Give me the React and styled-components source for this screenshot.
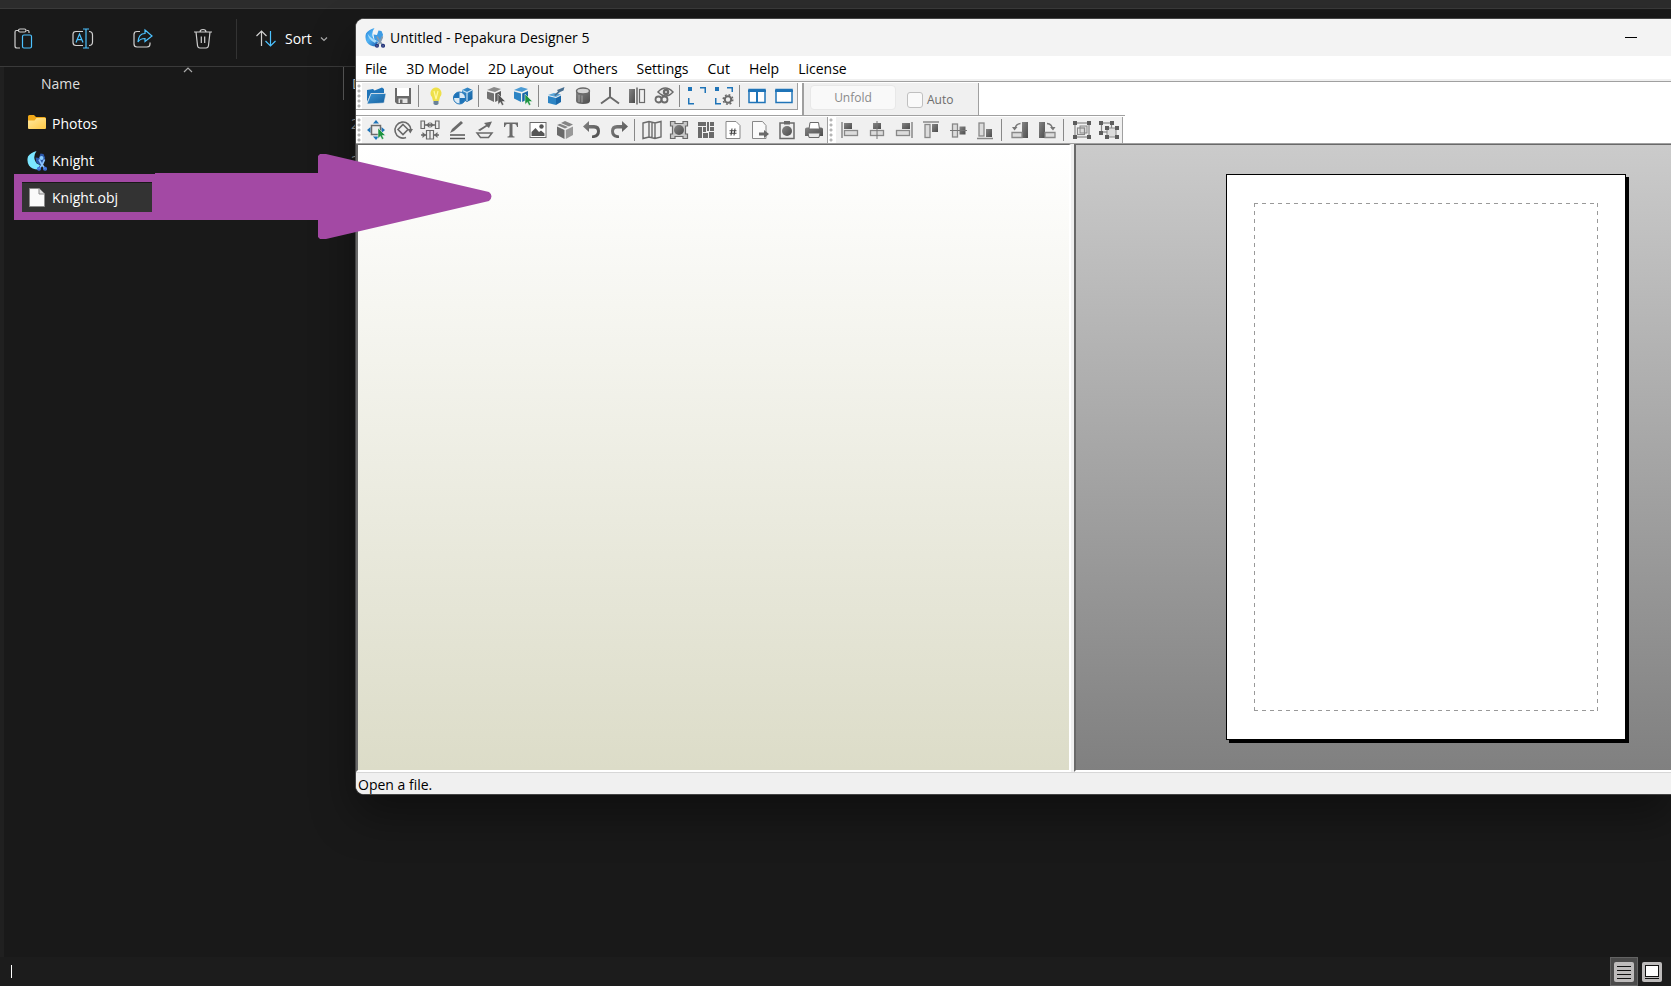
import styled, { createGlobalStyle } from "styled-components";

const GRAY = "#6a6a6a";
const LIGHT = "#dcdcdc";
const BLUE = "#1f74b8";
const SKY = "#4cc2ff";
const PALE = "#d0d0d0";

const App = () => {
  return (
    <Desktop>
      <GlobalStyle />
      <Defs />
      <Explorer />
      <Designer />
      <DragArrow viewBox="0 0 478 86" aria-hidden="true">
        <path
          fillRule="evenodd"
          d="M0 20H141V19H304V2L306 0H312L475 38Q480 42 475 47L312 85H306L304 83V66H0ZM8 28V58H138V28Z"
        />
      </DragArrow>
    </Desktop>
  );
};

const Defs = () => (
  <Hidden aria-hidden="true">
    <linearGradient id="steel" x1="0" y1="0" x2="1" y2="1">
      <stop offset="0" stopColor="#858585" />
      <stop offset="1" stopColor="#4c4c4c" />
    </linearGradient>
    <linearGradient id="azure" x1="0" y1="0" x2="1" y2="1">
      <stop offset="0" stopColor="#3f96d3" />
      <stop offset="1" stopColor="#135f9f" />
    </linearGradient>
    <linearGradient id="moon" x1="0" y1="0" x2="1" y2="1">
      <stop offset="0" stopColor="#1f7fd8" />
      <stop offset="0.45" stopColor="#52b4f4" />
      <stop offset="1" stopColor="#1c5fae" />
    </linearGradient>
    <linearGradient id="folder" x1="0" y1="0" x2="1" y2="1">
      <stop offset="0" stopColor="#ffe9a0" />
      <stop offset="1" stopColor="#ffc843" />
    </linearGradient>
  </Hidden>
);

/* ---------- file explorer ---------- */

const Explorer = () => (
  <Files>
    <TabStrip />
    <Commands>
      <Command aria-label="Paste">
        <Svg $size={22} viewBox="0 0 22 22">
          <path d="M6 2.500H4.500Q3 2.500 3 4V18Q3 20 5 20H8M14.500 2.500H16Q17 2.500 17 4V5" {...line(PALE)} />
          <rect x="6.500" y="1" width="7.500" height="3" rx="1.500" {...line(PALE)} />
          <rect x="10.500" y="7" width="9" height="13" rx="1.500" {...line(SKY)} />
        </Svg>
      </Command>
      <Command aria-label="Rename">
        <Svg $size={22} viewBox="0 0 22 22">
          <path d="M11 3.500H4Q1 3.500 1 6.500V14.500Q1 17.500 4 17.500H11M17 3.500Q20.500 3.500 20.500 7V14Q20.500 17.500 17 17.500" {...line(PALE)} />
          <path d="M4 14.500L7.500 6L11 14.500M5.300 11.700H9.800M14 1V20M11 1H17M11 20H17" {...line(SKY)} />
        </Svg>
      </Command>
      <Command aria-label="Share">
        <Svg $size={22} viewBox="0 0 22 22">
          <path d="M8 3.500H5Q2 3.500 2 6.500V16Q2 19 5 19H15Q18 19 18 16V14.500" {...line(PALE)} />
          <path d="M13 2L20 8L13 13.500V10.500Q8 10.500 6 14Q6.500 5.500 13 5.500Z" {...line(SKY)} />
        </Svg>
      </Command>
      <Command aria-label="Delete">
        <Svg $size={22} viewBox="0 0 22 22">
          <path d="M2 4H20M8 4Q8 1.500 11 1.500T14 4M4 4L5.500 17.500Q5.800 20 8 20H14Q16.200 20 16.500 17.500L18 4M9.300 8.500V15M12.700 8.500V15" {...line(PALE)} />
        </Svg>
      </Command>
      <CommandRule />
      <SortButton>
        <Svg $size={22} viewBox="0 0 22 22">
          <path d="M6.500 18V3M1.500 8L6.500 3L11.500 8" {...line(PALE)} />
          <path d="M15.500 3V18M10.500 13L15.500 18L20.500 13" {...line(SKY)} />
        </Svg>
        <span>Sort</span>
        <Svg $size={8} viewBox="0 0 8 8">
          <path d="M1 2.500L4 5.500L7 2.500" {...line("#aaa")} />
        </Svg>
      </SortButton>
    </Commands>
    <Listing>
      <FileTable>
        <thead>
          <tr>
            <NameHead>
              <HeadLabel>
                Name
                <SortMark viewBox="0 0 10 6">
                  <path d="M1 5L5 1L9 5" {...line("#aaa")} />
                </SortMark>
              </HeadLabel>
            </NameHead>
            <DateHead>
              <DateLabel>D</DateLabel>
            </DateHead>
          </tr>
        </thead>
        <tbody>
          <FileRow name="Photos" date="2" icon={<FolderIcon />} />
          <FileRow name="Knight" date="2" icon={<AppIcon bright />} />
          <FileRow name="Knight.obj" icon={<PageIcon />} selected />
        </tbody>
      </FileTable>
    </Listing>
    <Footer>
      <Caret />
      <Views>
        <ViewButton aria-label="Details" $active>
          <Svg $size={20} viewBox="0 0 20 20">
            <rect width="20" height="20" rx="2" fill="#bdbbbb" />
            <path d="M3 4.500H17M3 8.500H17M3 12.500H17M3 16.500H17" stroke="#111" />
          </Svg>
        </ViewButton>
        <ViewButton aria-label="Large icons">
          <Svg $size={20} viewBox="0 0 20 20">
            <rect width="20" height="20" rx="2" fill="#bdbbbb" />
            <rect x="3.500" y="3.500" width="13" height="11" fill="#fff" stroke="#111" />
            <path d="M3 16.500H17" stroke="#111" />
          </Svg>
        </ViewButton>
      </Views>
    </Footer>
  </Files>
);

const FileRow = ({ name, date, icon, selected }) => (
  <tr>
    <NameCell>
      <FileName $selected={selected}>
        {icon}
        {name}
      </FileName>
    </NameCell>
    <DateCell>{date}</DateCell>
  </tr>
);

const line = (color, width = 1.2) => ({
  fill: "none",
  stroke: color,
  strokeWidth: width,
});

const FolderIcon = () => (
  <Svg $size={20} viewBox="0 0 20 20">
    <path d="M1 2.500Q1 1 2.500 1H7L9 3H17.500Q19 3 19 4.500V7H1Z" fill="#f0a818" />
    <path d="M1 6.500H7.500L9.500 4H18Q19 4 19 5V14Q19 15 18 15H2Q1 15 1 14Z" fill="url(#folder)" />
  </Svg>
);

const PageIcon = () => (
  <Svg $size={20} viewBox="0 0 20 20">
    <path d="M2.500 .5H12L17.500 6V18.500H2.500Z" fill="#fafafa" stroke="#8a8a8a" />
    <path d="M12 .5V6H17.500" fill="#e2e2e2" stroke="#8a8a8a" />
  </Svg>
);

const AppIcon = ({ bright }) => (
  <Svg $size={20} viewBox="0 0 20 20">
    <path
      d="M9.500 0Q3.500 1.500 1 5.500Q-.5 10 2 14.500Q5 18.500 11 18.500L13 14Q9 13 8 9.500Q6 5 9.500 0Z"
      fill={bright ? "#7be6ff" : "url(#moon)"}
    />
    <path
      d="M8.500 6.500L12 7L13.500 2.500L16.500 3L18 6.500L17 12L13.500 14L9.500 12Z"
      fill={bright ? "#2a56a8" : "#3c9be4"}
    />
    {!bright && <path d="M2.500 5.500Q5 10 11.500 12.500L10 15Q4 12.500 2.500 5.500Z" fill="#a8dcfa" />}
    <path
      d="M12 8.500L14.500 13L18.300 18M17.500 8.500L15.500 13L12 18"
      stroke={bright ? "#8cc4ff" : "#8598ac"}
      strokeWidth="1.700"
      fill="none"
    />
    {bright && <circle cx="14.500" cy="7" r="2" fill="#8ccfff" />}
    <circle cx="12" cy="17.800" r="1.300" {...line(bright ? "#3f73e0" : "#25357c", 1.500)} />
    <circle cx="18" cy="17.800" r="1.300" {...line(bright ? "#3f73e0" : "#25357c", 1.500)} />
  </Svg>
);

/* ---------- designer window ---------- */

const menus = ["File", "3D Model", "2D Layout", "Others", "Settings", "Cut", "Help", "License"];

const Designer = () => (
  <Window>
    <TitleBar>
      <AppIcon />
      <Title>Untitled - Pepakura Designer 5</Title>
      <Minimize aria-label="Minimize">
        <MinimizeMark />
      </Minimize>
    </TitleBar>
    <MenuBar>
      {menus.map((menu) => (
        <MenuItem key={menu}>{menu}</MenuItem>
      ))}
    </MenuBar>
    <ToolRow>
      <Toolbar $short>
        <Grip />
        <Tools names={mainTools} />
      </Toolbar>
      <UnfoldBar>
        <UnfoldButton disabled>Unfold</UnfoldButton>
        <AutoLabel>
          <AutoBox type="checkbox" disabled />
          Auto
        </AutoLabel>
      </UnfoldBar>
    </ToolRow>
    <ToolRow $last>
      <ToolStrip>
        <Toolbar>
          <Grip />
          <Tools names={layoutTools} />
        </Toolbar>
        <Toolbar>
          <Grip $wide />
          <Tools names={alignTools} spaced />
        </Toolbar>
      </ToolStrip>
    </ToolRow>
    <Panes>
      <ModelPane />
      <LayoutPane>
        <Paper>
          <PrintMargin />
        </Paper>
      </LayoutPane>
    </Panes>
    <StatusBar>Open a file.</StatusBar>
  </Window>
);

const Tools = ({ names, spaced }) => (
  <ToolGroup>
    {names.map((name, i) =>
      name === "|" ? (
        <ToolRule key={i} $spaced={spaced} />
      ) : (
        <ToolButton key={i} aria-label={name}>
          <Svg $size={20} viewBox="0 0 20 20">
            {icons[name]}
          </Svg>
        </ToolButton>
      )
    )}
  </ToolGroup>
);

const mainTools = [
  "Open", "Save", "|", "Light", "Textures", "|", "Select part", "Select face", "|",
  "Export", "Cylinder", "Axes", "Mirror", "Inspect", "|", "Fit", "Fit settings", "|",
  "Two panes", "One pane",
];

const layoutTools = [
  "Move", "Rotate", "Join", "Edit line", "Edit flaps", "Text", "Image", "Box", "Undo", "Redo", "|",
  "Pages", "Scale", "Arrange", "Numbering", "Export page", "Copy", "Print",
];

const alignTools = [
  "Align left", "Align center", "Align right", "Align top", "Align middle", "Align bottom", "|",
  "Rotate left", "Rotate right", "|", "Group", "Ungroup",
];

const cube = (top, left, right) => (
  <>
    <path d="M1 4L8 1L15 3L9 6Z" fill={top} />
    <path d="M1 5.500L8 7.500V16L1 12.500Z" fill={left} />
    <path d="M9.200 7.500L15 5V13L9.200 16Z" fill={right} />
  </>
);

const cursor = (color) => (
  <path d="M12 8V18.500L14.400 16.200L16 19.500L17.800 18.500L16.200 15.500H19.500Z" fill={color} stroke="#f0f0f0" strokeWidth=".5" />
);

const corner = (x, y) => <rect key={`${x}-${y}`} x={x} y={y} width="4" height="4" fill="#5c5c5c" />;

const icons = {
  Open: (
    <>
      <path d="M1 16V4L7 3L8.500 4.500L16 1.500L18 3V7H5Z" fill={BLUE} />
      <path d="M1 18L5 7.500H20L18 17Z" fill="url(#azure)" stroke="#f0f0f0" strokeWidth=".6" />
    </>
  ),
  Save: (
    <>
      <path d="M2 2H18V18H4L2 16Z" fill={GRAY} />
      <path d="M4 2H16V10H4Z" fill="#fff" />
      <path d="M5.500 12.500H14.500V17H5.500Z" fill="#e4e4e4" />
      <path d="M7 13.500H9.500V17H7Z" fill={GRAY} />
    </>
  ),
  Light: (
    <>
      <path d="M10 1.500A5.700 5.700 0 0 1 14 11L13 15H7L6 11A5.700 5.700 0 0 1 10 1.500Z" fill="#eee04a" />
      <path d="M8 5L10 13L12 5" {...line("#fff8a0")} />
      <path d="M7.500 15H12.500V18L11 19H9L7.500 18Z" fill="#6a8298" />
    </>
  ),
  Textures: (
    <>
      <path d="M9 4L14.500 1.500L19.500 4V13L14 16L9 13Z" fill="url(#azure)" />
      <path d="M9.500 4.500L14 6.500L19 4M14 6.500V15" {...line("#c6e0f2")} />
      <circle cx="6.500" cy="12" r="6" fill="#dbeaf5" stroke={BLUE} />
      <path d="M6.500 12V6A6 6 0 0 0 .5 12ZM6.500 12V18A6 6 0 0 0 12.500 12Z" fill={BLUE} />
    </>
  ),
  "Select part": (
    <>
      {cube("#8a8a8a", "#707070", "#5c5c5c")}
      {cursor("#555")}
    </>
  ),
  "Select face": (
    <>
      {cube("#4b9bd4", "#2c84c4", "#1967a8")}
      {cursor("#1d9440")}
    </>
  ),
  Export: (
    <>
      <path d="M2 9L8 7L15 8.500L10 11Z" fill="#5aa5d8" />
      <path d="M2 10L10 12V19L2 17Z" fill="#2c84c4" />
      <path d="M10 12L15 9.500V16L10 19Z" fill="#1967a8" />
      <path d="M8 9L12 5.500L11 4L18.500 1L17.500 4.500L14 6L9.500 10Z" fill="#486f90" />
    </>
  ),
  Cylinder: (
    <>
      <path d="M3 5V15Q3 18 10 18T17 15V5Z" fill="url(#steel)" />
      <ellipse cx="10" cy="5" rx="6.500" ry="3" fill="#d6d6d6" stroke={GRAY} strokeWidth="1.500" />
      <path d="M6 9V16M9 9.500V16.500" stroke="#a5a5a5" />
    </>
  ),
  Axes: <path d="M10 1V11L1 17.500M10 11L19 17.500" {...line(GRAY, 2)} />,
  Mirror: (
    <>
      <rect x="2" y="3" width="6" height="14" fill="url(#steel)" />
      <path d="M10 1.500V18.500" stroke="#444" strokeWidth="1.200" />
      <rect x="12.500" y="3.500" width="5" height="13" {...line(GRAY)} />
    </>
  ),
  Inspect: (
    <>
      <path d="M4 6Q11-2 19 6Q12 14 4 6Z" fill="#e8e8e8" stroke={GRAY} strokeWidth="1.500" />
      <circle cx="12" cy="6" r="3.200" fill={GRAY} />
      <circle cx="12" cy="6" r="1" fill="#ddd" />
      <circle cx="4.500" cy="13.500" r="3" {...line(GRAY, 1.800)} />
      <circle cx="10.500" cy="13.500" r="3" {...line(GRAY, 1.800)} />
    </>
  ),
  Fit: (
    <path d="M1 1H5V5H1ZM13 1H19V7H17.500V2.500H13ZM1 12H2.500V17H7V18.500H1Z" fill={BLUE} />
  ),
  "Fit settings": (
    <>
      <path d="M1 1H5V5H1ZM13 1H19V6H17.500V2.500H13ZM1 12H2.500V17H7V18.500H1Z" fill={BLUE} />
      <circle cx="14" cy="13.500" r="3.200" {...line(GRAY, 2)} />
      <circle cx="14" cy="13.500" r="4.800" {...line(GRAY, 1.500)} strokeDasharray="1.900 1.870" />
    </>
  ),
  "Two panes": (
    <>
      <rect x="2" y="3.500" width="16" height="13" fill="#fff" stroke={BLUE} strokeWidth="1.500" />
      <path d="M1 5H19M10 3V17" {...line(BLUE, 2)} />
    </>
  ),
  "One pane": (
    <>
      <rect x="2" y="3.500" width="16" height="13" fill="#fff" stroke={BLUE} strokeWidth="1.500" />
      <path d="M1 5H19" {...line(BLUE, 2)} />
    </>
  ),
  Move: (
    <>
      <path d="M10 0L13 3.500H7ZM10 20L7 16.500H13ZM1 10L4.500 7V13ZM19 10L15.500 7V13Z" fill={BLUE} />
      <rect x="5.500" y="5.500" width="9" height="9" fill="#eee" stroke={GRAY} strokeWidth="1.500" />
      {cursor("#1d9440")}
    </>
  ),
  Rotate: (
    <>
      <path d="M13 17.500A8 8 0 1 1 18 10" {...line(GRAY, 1.600)} />
      <path d="M14.500 9H20L17.300 13.500Z" fill={GRAY} />
      <path d="M10 4.500L15 9.500L10 14.500L5 9.500Z" {...line(GRAY, 1.600)} />
    </>
  ),
  Join: (
    <>
      <path d="M1 1H4.500V8.500H1ZM15.500 1H19V8.500H15.500ZM6.500 10.500H13.500V19H6.500ZM10 10.500V19" {...line(GRAY)} />
      <path d="M5 5H15M1 15H7M13 15H19" {...line(GRAY, 1.500)} />
      <path d="M9.500 2V8L6 5ZM10.500 2V8L14 5ZM2.500 12V18L6 15ZM17.500 12V18L14 15Z" fill={GRAY} />
    </>
  ),
  "Edit line": (
    <>
      <path d="M3 13L5 9L14 1L16 3L7 11Z" fill={GRAY} />
      <path d="M3 15H18M3 18.500H18" {...line("#555", 1.600)} />
    </>
  ),
  "Edit flaps": (
    <>
      <path d="M4 10L12 5L10 3L18 1.500L15 8L13 6.500L6 11Z" fill={GRAY} />
      <path d="M3 13H18L14.500 17.500H6.500Z" {...line(GRAY, 1.500)} />
    </>
  ),
  Text: <path d="M3 2.500H17V7H16Q15.500 4 13.500 4H11.500V15Q11.500 16.500 13.500 16.500V17.500H6.500V16.500Q8.500 16.500 8.500 15V4H6.500Q4.500 4 4 7H3Z" fill={GRAY} />,
  Image: (
    <>
      <rect x="2" y="2.500" width="16" height="15" fill="#fff" stroke={GRAY} />
      <path d="M3.500 16V12L7.500 8L11 12L13 10.500L16.500 13.500V16Z" fill="#555" />
      <circle cx="13.500" cy="6.500" r="2.200" fill="#555" />
    </>
  ),
  Box: (
    <>
      <path d="M10 1L18 4.500L14 6.500L6 3ZM5 3.700L13 7L10 8.500L2 5Z" fill="#858585" />
      <path d="M2 6.500L9.500 10V19L2 15Z" fill={GRAY} />
      <path d="M10.800 10L18 6.500V15L10.800 19Z" fill="#999" />
    </>
  ),
  Undo: <path d="M7 1V5H12Q18 5 18 11T12 18H10V15.500Q15 15 15 11.500T11 8.500H7V12L1 6.500Z" fill="url(#steel)" />,
  Redo: <path d="M13 1V5H8Q2 5 2 11T8 18H10V15.500Q5 15 5 11.500T9 8.500H13V12L19 6.500Z" fill="url(#steel)" />,
  Pages: <path d="M1 3L7 1.500L13 3L19 1.500V17L13 18.500L7 17L1 18.500ZM7 1.500V17M13 3V18.500M10 3V17" {...line(GRAY, 1.400)} />,
  Scale: (
    <>
      <path d="M1.500 1.500H6V3.500H14V1.500H18.500V6H16.500V14H18.500V18.500H14V16.500H6V18.500H1.500V14H3.500V6H1.500Z" fill="#c8c8c8" stroke={GRAY} strokeWidth="1.200" />
      <circle cx="10" cy="10" r="5" fill="url(#steel)" />
    </>
  ),
  Arrange: <path d="M2 2H10V6H2ZM2 7H6V18H2ZM7 7H10V12H7ZM11 2H13V11H11ZM14 2H18V6H14ZM14 7H18V11H14ZM7 13H12V18H7ZM13 12H18V18H13Z" fill={GRAY} />,
  Numbering: (
    <>
      <path d="M3 1.500H13L17 5.500V18.500H3Z" fill="#fff" stroke="#888" />
      <path d="M9 8.500L8 15.500M12 8.500L11 15.500M6.500 10.700H13.500M6.500 13.300H13.500" {...line("#444", 1.100)} />
    </>
  ),
  "Export page": (
    <>
      <path d="M2.500 1.500H12.500L16 5.500V18.500H2.500Z" fill="#fafafa" stroke="#888" />
      <path d="M9 12.500H14V10L19 14L14 18V15.500H9Z" fill={GRAY} />
    </>
  ),
  Copy: (
    <>
      <rect x="3" y="3" width="14" height="15.500" fill="#eee" stroke={GRAY} strokeWidth="1.500" />
      <path d="M7 1H13V4.500H7Z" fill={GRAY} />
      <circle cx="10" cy="11" r="5" fill="url(#steel)" />
    </>
  ),
  Print: (
    <>
      <path d="M1 9Q1 7.500 3 7.500H17Q19 7.500 19 9V16H1Z" fill="url(#steel)" />
      <path d="M6 2.500H14.500L15.500 9H5Z" fill="#fff" stroke={GRAY} />
      <path d="M4 13H16L15 17.500H5Z" fill="#e8e8e8" stroke={GRAY} />
    </>
  ),
  "Align left": (
    <>
      <path d="M2 2V18" stroke="#888" strokeWidth="1.500" />
      <rect x="4" y="3" width="8" height="6" fill="url(#steel)" />
      <rect x="4.500" y="10.500" width="13" height="5" fill={LIGHT} stroke="#888" strokeWidth="1.300" />
    </>
  ),
  "Align center": (
    <>
      <rect x="6" y="3" width="8" height="6" fill="url(#steel)" />
      <rect x="3.500" y="10.500" width="13" height="5" fill={LIGHT} stroke="#888" strokeWidth="1.300" />
      <path d="M10 1V19" stroke="#777" />
    </>
  ),
  "Align right": (
    <>
      <path d="M18 2V18" stroke="#888" strokeWidth="1.500" />
      <rect x="8" y="3" width="8" height="6" fill="url(#steel)" />
      <rect x="2.500" y="10.500" width="13" height="5" fill={LIGHT} stroke="#888" strokeWidth="1.300" />
    </>
  ),
  "Align top": (
    <>
      <path d="M2 2H18" stroke="#888" strokeWidth="1.500" />
      <rect x="4" y="4.500" width="5" height="13" fill={LIGHT} stroke="#888" strokeWidth="1.300" />
      <rect x="11" y="4" width="6" height="8" fill="url(#steel)" />
    </>
  ),
  "Align middle": (
    <>
      <rect x="4.500" y="4" width="5" height="13" fill={LIGHT} stroke="#888" strokeWidth="1.300" />
      <rect x="11.500" y="6.500" width="6" height="8" fill="url(#steel)" />
      <path d="M2 10.500H19" stroke="#777" />
    </>
  ),
  "Align bottom": (
    <>
      <path d="M2 18.500H18" stroke="#888" strokeWidth="1.500" />
      <rect x="4" y="3" width="5" height="13" fill={LIGHT} stroke="#888" strokeWidth="1.300" />
      <rect x="11" y="9" width="6" height="8" fill="url(#steel)" />
    </>
  ),
  "Rotate left": (
    <>
      <rect x="12" y="2" width="6" height="16" fill="url(#steel)" />
      <path d="M2 12.500H12V17.500H2Z" fill={LIGHT} stroke="#888" strokeWidth="1.300" />
      <path d="M10.500 3.500Q5.500 4 5 9" {...line("#777", 1.300)} />
      <path d="M2 7H7.500L4.500 10.500Z" fill="#777" />
    </>
  ),
  "Rotate right": (
    <>
      <rect x="2" y="2" width="6" height="16" fill="url(#steel)" />
      <path d="M8 12.500H18V17.500H8Z" fill={LIGHT} stroke="#888" strokeWidth="1.300" />
      <path d="M10 3.500Q15 4 15.500 9" {...line("#777", 1.300)} />
      <path d="M13 7H18.500L16 10.500Z" fill="#777" />
    </>
  ),
  Group: (
    <>
      <rect x="3" y="3" width="14" height="14" {...line("#888")} />
      <rect x="8" y="6" width="7" height="7" fill={LIGHT} stroke="#888" />
      <rect x="5.500" y="8" width="7" height="6.500" {...line("#888")} />
      {[1, 15].map((x) => [1, 15].map((y) => corner(x, y)))}
    </>
  ),
  Ungroup: (
    <>
      <rect x="2.500" y="3" width="10" height="9" {...line("#888")} />
      <rect x="8" y="8" width="9" height="9" fill={LIGHT} stroke="#888" />
      {[[0, 1], [11, 1], [0, 11], [6, 6], [16, 6], [6, 15], [16, 15]].map(([x, y]) => corner(x, y))}
    </>
  ),
};

/* ---------- styles ---------- */

const GlobalStyle = createGlobalStyle`
  * {
    box-sizing: border-box;
  }
  body {
    margin: 0;
    background: #191919;
    font-family: "Open Sans", "Noto Sans", sans-serif;
    font-size: 14px;
    line-height: 20px;
  }
  button {
    padding: 0;
    border: 0;
    background: none;
    color: inherit;
    font: inherit;
  }
`;

const Desktop = styled.div`
  position: relative;
  min-height: 100vh;
  overflow: hidden;
`;

const Hidden = styled.svg`
  position: absolute;
  width: 0;
  height: 0;
`;

const Svg = styled.svg`
  display: block;
  flex: none;
  width: ${({ $size }) => $size}px;
  height: ${({ $size }) => $size}px;
`;

const Files = styled.section`
  display: flex;
  flex-direction: column;
  min-height: 100vh;
  background: #191919;
  color: #fff;
`;

const TabStrip = styled.div`
  height: 9px;
  background: #2c2c2c;
  border-bottom: 1px solid #3a3a3a;
`;

const Commands = styled.div`
  display: flex;
  align-items: center;
  height: 58px;
  padding: 2px 0 0 3px;
  border-bottom: 1px solid #3a3a3a;
`;

const Command = styled.button`
  display: flex;
  align-items: center;
  justify-content: center;
  width: 40px;
  height: 40px;
  margin-right: 20px;
`;

const CommandRule = styled.div`
  width: 1px;
  height: 40px;
  margin-left: -7px;
  background: #333;
`;

const SortButton = styled.button`
  display: flex;
  align-items: center;
  gap: 8px;
  margin-left: 18px;
`;

const Listing = styled.div`
  flex: 1;
  border-left: 4px solid #202020;
`;

const FileTable = styled.table`
  border-collapse: collapse;
  table-layout: fixed;
  width: 100%;
`;

const NameHead = styled.th`
  width: 340px;
  height: 38px;
  padding: 0 0 0 28px;
  vertical-align: top;
  font-weight: 400;
  text-align: left;
`;

const HeadLabel = styled.div`
  position: relative;
  display: flex;
  align-items: center;
  height: 33px;
  padding-left: 9px;
  border-right: 1px solid #5c5c5c;
  color: #dedede;
`;

const SortMark = styled.svg`
  position: absolute;
  top: 0;
  left: 50%;
  width: 10px;
  height: 6px;
  margin-left: -5px;
`;

const DateHead = styled.th`
  padding: 0 0 0 8px;
  vertical-align: top;
  font-weight: 400;
  text-align: left;
`;

const DateLabel = styled.div`
  display: flex;
  align-items: center;
  height: 33px;
  color: #dedede;
`;

const NameCell = styled.td`
  height: 37px;
  padding: 0 0 0 18px;
`;

const FileName = styled.div`
  display: flex;
  align-items: center;
  gap: 5px;
  width: 130px;
  height: 30px;
  padding-left: 5px;
  background: ${({ $selected }) => ($selected ? "#333" : "none")};
`;

const DateCell = styled.td`
  padding: 0 0 0 7px;
  color: #9a9a9a;
`;

const Footer = styled.footer`
  display: flex;
  align-items: center;
  height: 29px;
  padding-left: 11px;
  background: #1c1c1c;
`;

const Caret = styled.div`
  width: 1px;
  height: 13px;
  background: #fff;
`;

const Views = styled.div`
  display: flex;
  margin-left: auto;
  padding-right: 5px;
`;

const ViewButton = styled.button`
  display: flex;
  align-items: center;
  justify-content: center;
  width: 28px;
  height: 29px;
  border: 1px solid ${({ $active }) => ($active ? "#636363" : "transparent")};
  background: ${({ $active }) => ($active ? "#4a4a4a" : "none")};
`;

const DragArrow = styled.svg`
  position: absolute;
  top: 154px;
  left: 14px;
  width: 478px;
  height: 86px;
  fill: #a349a4;
`;

const Window = styled.main`
  position: absolute;
  top: 18px;
  left: 355px;
  right: 0;
  overflow: hidden;
  border: 1px solid #444;
  border-right: 0;
  border-radius: 9px 0 0 9px;
  background: #fff;
  color: #000;
  box-shadow: 0 20px 44px rgba(0, 0, 0, 0.4);
`;

const TitleBar = styled.header`
  display: flex;
  align-items: center;
  height: 37px;
  padding: 0 17px 0 9px;
  background: #f3f3f3;
`;

const Title = styled.h1`
  margin: 0 auto 0 5px;
  font-size: 14px;
  font-weight: 400;
`;

const Minimize = styled.button`
  display: flex;
  justify-content: center;
  align-items: center;
  width: 46px;
  height: 36px;
`;

const MinimizeMark = styled.span`
  width: 12px;
  height: 1px;
  background: #000;
`;

const MenuBar = styled.nav`
  display: flex;
  gap: 19px;
  height: 26px;
  padding: 2px 0 0 9px;
  border-bottom: 1px solid #a0a0a0;
  background: linear-gradient(#fff 23px, #f0f0f0 23px);
`;

const MenuItem = styled.button`
  height: 22px;
`;

const ToolRow = styled.div`
  display: flex;
  align-items: flex-start;
  padding-top: ${({ $last }) => ($last ? 0 : 1)}px;
  border-bottom: ${({ $last }) => ($last ? "1px solid #a0a0a0" : "0")};
`;

const ToolStrip = styled.div`
  display: flex;
  padding: 1px 2px 0 0;
  border-top: 1px solid #a0a0a0;
`;

const Toolbar = styled.div`
  display: flex;
  height: ${({ $short }) => ($short ? 27 : 26)}px;
  border-right: 1px solid #a0a0a0;
  border-bottom: ${({ $short }) => ($short ? "1px solid #a0a0a0" : "0")};
`;

const Grip = styled.span`
  width: ${({ $wide }) => ($wide ? 8 : 6)}px;
  background: radial-gradient(circle at 2px 3px, #b5b5b5 1px, transparent 2px) 1px 0 / 8px 5px repeat-y;
`;

const ToolGroup = styled.div`
  display: flex;
  align-items: center;
  background: #f0f0f0;
`;

const ToolButton = styled.button`
  display: flex;
  align-items: center;
  justify-content: center;
  width: 27px;
  height: 26px;
`;

const ToolRule = styled.span`
  width: 1px;
  height: 22px;
  margin: 0 ${({ $spaced }) => ($spaced ? 4 : 3)}px 0 ${({ $spaced }) => ($spaced ? 3 : 2)}px;
  background: #888;
`;

const UnfoldBar = styled.div`
  display: flex;
  align-items: flex-start;
  gap: 11px;
  height: 32px;
  margin-left: 4px;
  padding: 2px 25px 0 6px;
  border-left: 2px solid #a0a0a0;
  border-right: 1px solid #a0a0a0;
  background: #f0f0f0;
`;

const UnfoldButton = styled.button`
  width: 86px;
  height: 25px;
  border: 1px solid #e8e8e8;
  border-radius: 4px;
  background: #f9f9f9;
  color: #8a8a8a;
  font-size: 12px;
`;

const AutoLabel = styled.label`
  display: flex;
  align-items: center;
  gap: 4px;
  padding-top: 5px;
  color: #6d6d6d;
  font-size: 12px;
`;

const AutoBox = styled.input`
  appearance: none;
  width: 16px;
  height: 16px;
  margin: 0;
  border: 1px solid #c0c0c0;
  border-radius: 3px;
  background: #fafafa;
`;

const Panes = styled.div`
  display: grid;
  grid-template-columns: 715fr 597fr;
  gap: 3px;
  height: 628px;
  background: #f0f0f0;
`;

const ModelPane = styled.section`
  border: 2px solid #fff;
  border-top: 1px solid #696969;
  border-left: 2px solid #696969;
  background: linear-gradient(#fff, #dcdcc8) padding-box;
`;

const LayoutPane = styled.section`
  padding: 29px 0 0 150px;
  border-top: 1px solid #696969;
  border-left: 2px solid #696969;
  border-bottom: 2px solid #fff;
  background: linear-gradient(#cbcbcb, #808080) padding-box;
`;

const Paper = styled.div`
  width: 400px;
  height: 566px;
  padding: 28px 27px;
  border: 1px solid #000;
  background: #fff;
  box-shadow: 3px 3px 0 #000;
`;

const PrintMargin = styled.div`
  height: 100%;
  background:
    repeating-linear-gradient(90deg, #999 0 4px, transparent 4px 8px) top / 100% 1px no-repeat,
    repeating-linear-gradient(90deg, #999 0 4px, transparent 4px 8px) bottom / 100% 1px no-repeat,
    repeating-linear-gradient(#999 0 4px, transparent 4px 8px) left / 1px 100% no-repeat,
    repeating-linear-gradient(#999 0 4px, transparent 4px 8px) right / 1px 100% no-repeat;
`;

const StatusBar = styled.footer`
  height: 22px;
  padding: 2px 0 0 2px;
  border-top: 1px solid #d7d7d7;
  background: #f0f0f0;
`;

export default App;
